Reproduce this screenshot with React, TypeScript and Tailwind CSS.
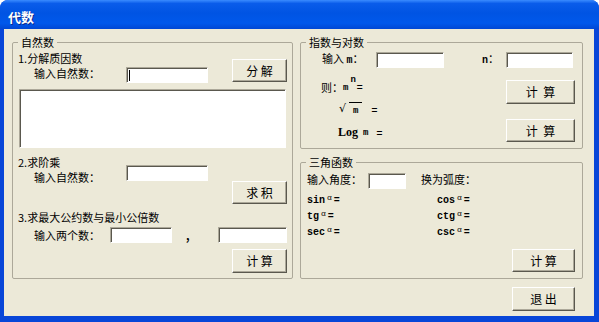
import React from 'react';

const cjk = "font-['Noto_Sans_CJK_SC','Noto_Sans',sans-serif]";

const Btn: React.FC<{ className?: string; children: React.ReactNode }> = ({ className = '', children }) => (
  <button
    className={`h-[23px] shrink-0 bg-[#ece9d8] border border-t-white border-l-white border-r-[#5a584e] border-b-[#5a584e] shadow-[inset_-1px_-1px_0_#aca899] text-[12px] leading-none text-black whitespace-pre ${className}`}
  >
    {children}
  </button>
);

const TextBox: React.FC<{ className?: string; caret?: boolean }> = ({ className = '', caret }) => (
  <div
    className={`h-[16px] shrink-0 bg-white border border-t-[#aca899] border-l-[#aca899] border-r-white border-b-white shadow-[inset_1px_1px_0_#5a584e] flex items-center pl-[2px] ${className}`}
  >
    {caret && <span className="w-px h-[11px] bg-black" />}
  </div>
);

const Legend: React.FC<{ children: React.ReactNode }> = ({ children }) => (
  <legend className="px-[3px] leading-[13px] text-[11px]">{children}</legend>
);

const Trig: React.FC<{ fn: string }> = ({ fn }) => (
  <div className="flex items-center h-[16px]">
    <span>{fn}</span>
    <span className="text-[8px] font-normal ml-[2px] mb-[5px]">α</span>
    <span className="ml-[2px]">=</span>
  </div>
);

export default function App() {
  return (
    <div className={`w-[599px] h-[322px] bg-white text-[11px] text-black ${cjk}`}>
      <div className="w-full h-full flex flex-col rounded-t-[8px] overflow-hidden bg-[#0846d8]">
        {/* title bar */}
        <div className="h-[29px] shrink-0 pl-[8px] pt-[9px] bg-[linear-gradient(to_bottom,#3a8bff_0%,#0a5cea_12%,#0054e3_45%,#0058eb_80%,#0047d4_100%)]">
          <span className="text-white font-bold text-[13px] leading-[14px] [text-shadow:1px_1px_0_#0b2a8f]">代数</span>
        </div>

        {/* frame */}
        <div className="flex-1 flex pl-[4px] pr-[5px] pb-[6px]">
          <div className="flex-1 flex gap-[7px] pl-[8px] pt-[7px] bg-[#ece9d8]">
            {/* 自然数 */}
            <fieldset className="w-[281px] h-[243px] shrink-0 border border-[#aca899] rounded-[2px] px-[5px]">
              <Legend>自然数</Legend>

              <div className="flex">
                <div className="w-[108px] shrink-0">
                  <div className="mt-[3px] leading-[12px] whitespace-nowrap">1.分解质因数</div>
                  <div className="mt-[3px] pl-[16px] leading-[13px]">输入自然数：</div>
                </div>
                <TextBox caret className="mt-[18px] w-[82px]" />
                <div className="flex-1" />
                <Btn className="mt-[10px] w-[55px]">分 解</Btn>
              </div>

              <div className="mt-[6px] ml-[1px] w-[267px] h-[59px] bg-white border border-t-[#aca899] border-l-[#aca899] border-r-white border-b-white shadow-[inset_1px_1px_0_#5a584e]" />

              <div className="flex">
                <div className="w-[108px] shrink-0">
                  <div className="mt-[8px] leading-[13px]">2.求阶乘</div>
                  <div className="mt-[2px] pl-[16px] leading-[13px]">输入自然数：</div>
                </div>
                <TextBox className="mt-[17px] w-[82px]" />
                <div className="flex-1" />
                <Btn className="mt-[33px] w-[55px]">求 积</Btn>
              </div>

              <div className="mt-[7px] leading-[13px] whitespace-nowrap">3.求最大公约数与最小公倍数</div>
              <div className="mt-[3px] flex items-center">
                <div className="w-[92px] shrink-0 pl-[16px] leading-[13px]">输入两个数：</div>
                <TextBox className="w-[62px]" />
                <span className="ml-[14px] flex-1 font-bold">,</span>
                <TextBox className="w-[69px]" />
              </div>
              <div className="mt-[5px] flex justify-end">
                <Btn className="w-[55px] h-[24px]">计 算</Btn>
              </div>
            </fieldset>

            {/* right column */}
            <div className="w-[283px] shrink-0 flex flex-col">
              <fieldset className="h-[113px] shrink-0 border border-[#aca899] rounded-[2px] pl-[5px] pr-[7px]">
                <Legend>指数与对数</Legend>
                <div className="mt-[2px] h-[17px] flex items-center">
                  <div className="w-[70px] shrink-0 pl-[16px] leading-[13px] whitespace-nowrap">
                    输入 <span className="font-['Liberation_Mono',monospace] text-[10px] font-bold">m</span>：
                  </div>
                  <TextBox className="w-[68px]" />
                  <div className="ml-[38px] w-[24px] shrink-0 leading-[13px]">
                    <span className="font-['Liberation_Mono',monospace] text-[10px] font-bold">n</span>：
                  </div>
                  <TextBox className="w-[67px]" />
                </div>
                <div className="flex">
                  <div className="flex-1">
                    <div className="mt-[12px] h-[14px] pl-[15px] flex items-end leading-[14px]">
                      <span>则：</span>
                      <span className="font-['Liberation_Mono',monospace] text-[9px] font-bold leading-[11px]">m</span>
                      <span className="font-['Liberation_Mono',monospace] text-[9px] font-bold leading-[11px] self-start -mt-[5px] ml-[2px]">n</span>
                      <span className="ml-[1px] font-bold text-[10px]">=</span>
                    </div>
                    <div className="mt-[6px] h-[16px] pl-[33px] flex items-end">
                      <span className="text-[11px] font-['DejaVu_Sans',sans-serif] leading-[14px]">√</span>
                      <span className="ml-[3px] border-t border-black px-[4px] pt-[3px] font-['Liberation_Mono',monospace] text-[9px] font-bold leading-[10px]">m</span>
                      <span className="ml-[9px] font-bold text-[10px] leading-[12px]">=</span>
                    </div>
                    <div className="mt-[9px] h-[14px] pl-[32px] flex items-end gap-[5px] leading-[14px]">
                      <span className="font-['Liberation_Serif',serif] font-bold text-[12px]">Log</span>
                      <span className="font-['Liberation_Mono',monospace] text-[9px] font-bold leading-[12px]">m</span>
                      <span className="ml-[3px] font-bold text-[10px] leading-[12px]">=</span>
                    </div>
                  </div>
                  <div className="w-[69px] shrink-0 flex flex-col">
                    <Btn className="mt-[12px] w-[69px] h-[24px]">{'计  算'}</Btn>
                    <Btn className="mt-[15px] w-[69px]">{'计  算'}</Btn>
                  </div>
                </div>
              </fieldset>

              <fieldset className="mt-[7px] h-[123px] shrink-0 border border-[#aca899] rounded-[2px] pl-[5px] pr-[7px]">
                <Legend>三角函数</Legend>
                <div className="mt-[4px] h-[16px] flex items-center">
                  <span className="ml-[1px] leading-[13px] mt-[-3px]">输入角度：</span>
                  <TextBox className="ml-[6px] w-[38px]" />
                  <span className="ml-[15px] leading-[13px] mt-[-3px]">换为弧度：</span>
                </div>
                <div className="mt-[3px] grid grid-cols-[130px_1fr] pl-[1px] font-['Liberation_Mono',monospace] text-[10px] font-bold">
                  <Trig fn="sin" />
                  <Trig fn="cos" />
                  <Trig fn="tg" />
                  <Trig fn="ctg" />
                  <Trig fn="sec" />
                  <Trig fn="csc" />
                </div>
                <div className="mt-[9px] flex justify-end">
                  <Btn className="w-[63px]">计 算</Btn>
                </div>
              </fieldset>

              <div className="mt-[8px] flex justify-end pr-[8px]">
                <Btn className="w-[63px] h-[24px]">退 出</Btn>
              </div>
            </div>
          </div>
        </div>
      </div>
    </div>
  );
}
